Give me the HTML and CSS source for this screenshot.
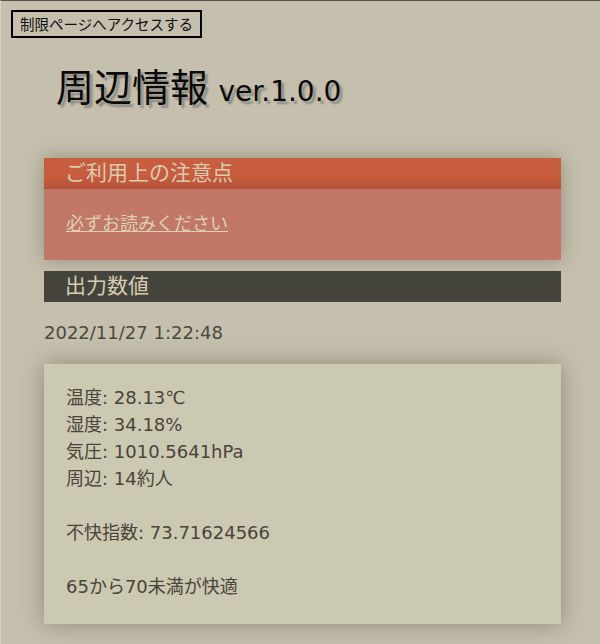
FILE: index.html
```html
<!DOCTYPE html>
<html lang="ja">
<head>
<meta charset="utf-8">
<title>周辺情報</title>
<link rel="stylesheet" href="styles.css">
</head>
<body>
<div class="frame">
  <div class="top"><button class="access" type="button">制限ページへアクセスする</button></div>
  <h1 class="title">周辺情報 <span class="ver">ver.1.0.0</span></h1>
  <section class="notice">
    <h2 class="notice-head">ご利用上の注意点</h2>
    <div class="notice-body"><a class="notice-link" href="#">必ずお読みください</a></div>
  </section>
  <h2 class="section-head">出力数値</h2>
  <p class="date">2022/11/27 1:22:48</p>
  <div class="card">
    <p class="readings">温度: 28.13℃<br>湿度: 34.18%<br>気圧: 1010.5641hPa<br>周辺: 14約人<br><br>不快指数: 73.71624566<br><br>65から70未満が快適</p>
  </div>
</div>
</body>
</html>
```
FILE: styles.css
```css
html, body {
  margin: 0;
  padding: 0;
  background: #c5c0ad;
}
body {
  font-family: "DejaVu Sans", "Noto Sans CJK JP", sans-serif;
  color: #4a463c;
}
.frame {
  min-height: 643px;
  border-top: 1px solid #55544f;
  border-left: 1px solid #d6d4cc;
  box-sizing: border-box;
  padding: 9px 0 0 0;
  display: flex;
  flex-direction: column;
}
.top {
  padding-left: 10px;
}
.access {
  font-family: "Noto Sans CJK JP", sans-serif;
  font-size: 14.5px;
  line-height: 24px;
  height: 28px;
  padding: 0 7px;
  margin: 0;
  border: 2px solid #000;
  background: transparent;
  color: #111;
  cursor: pointer;
}
.title {
  margin: 23px 0 0 55px;
  height: 48px;
  line-height: 48px;
  font-family: "Noto Sans CJK JP", sans-serif;
  font-size: 38px;
  font-weight: normal;
  color: #0a0a0a;
  text-shadow: 3px 3px 2px #8c8a82;
  white-space: nowrap;
}
.ver {
  font-family: "DejaVu Sans", sans-serif;
  font-size: 28px;
  margin-left: 2px;
}
.notice {
  margin: 49px 0 0 43px;
  width: 517px;
  box-shadow: 0 0 18px rgba(60, 55, 40, 0.35);
}
.notice-head, .section-head {
  margin: 0;
  height: 31px;
  line-height: 26px;
  padding-left: 21px;
  font-family: "Noto Sans CJK JP", sans-serif;
  font-size: 21px;
  font-weight: normal;
  color: #d8ccb0;
}
.notice-head {
  background: linear-gradient(#c95d3f 0%, #c75c3e 60%, #b55238 100%);
}
.notice-body {
  background: #c17866;
  height: 71px;
  box-sizing: border-box;
  padding: 20px 22px 0;
  font-family: "Noto Sans CJK JP", sans-serif;
  font-size: 18px;
  line-height: 27px;
}
.notice-link {
  color: #ddd0b4;
  text-decoration: underline;
}
.section-head {
  margin: 11px 0 0 43px;
  width: 517px;
  box-sizing: border-box;
  background: #45443c;
  color: #d6cdb2;
}
.date {
  margin: 17px 0 0 43px;
  font-size: 18px;
  line-height: 27px;
  height: 27px;
  color: #4b4a40;
}
.card {
  margin: 18px 0 20px 43px;
  width: 517px;
  height: 260px;
  box-sizing: border-box;
  padding: 20px 22px 0;
  background: #cbc9b2;
  box-shadow: 0 0 22px rgba(60, 55, 40, 0.4);
}
.readings {
  margin: 0;
  font-size: 18px;
  line-height: 27px;
  color: #4a4438;
}
```
